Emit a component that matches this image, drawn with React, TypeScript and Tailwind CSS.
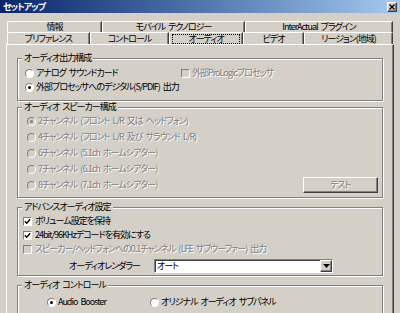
import React from 'react'

const dis = 'text-[#808080] [text-shadow:1px_1px_0_#fff]'
const etched = 'border border-[#808080] shadow-[1px_1px_0_#fff,inset_1px_1px_0_#fff]'
const raised = 'border border-white border-r-[#404040] border-b-[#404040] shadow-[inset_-1px_-1px_0_#808080]'
const sunken = 'border border-[#808080] border-r-white border-b-white shadow-[inset_1px_1px_0_#404040]'

function Radio({ on = false, off = false }: { on?: boolean; off?: boolean }) {
  return (
    <span
      className={`flex h-[9px] w-[9px] shrink-0 items-center justify-center rounded-full border border-[#808080] border-r-white border-b-white ${
        off ? 'bg-[#d4d0c8]' : 'bg-white'
      }`}
    >
      {on && <span className={`h-[3px] w-[3px] rounded-full ${off ? 'bg-[#808080]' : 'bg-black'}`} />}
    </span>
  )
}

function Check({ on = false, off = false }: { on?: boolean; off?: boolean }) {
  return (
    <span
      className={`flex h-[9px] w-[9px] shrink-0 items-center justify-center border border-[#808080] border-r-white border-b-white ${
        off ? 'bg-[#d4d0c8]' : 'bg-white'
      }`}
    >
      {on && (
        <svg width="7" height="7" viewBox="0 0 7 7">
          <path d="M0.8 3.2 L2.7 5.2 L6.2 1.3" fill="none" stroke="#000" strokeWidth="1.4" />
        </svg>
      )}
    </span>
  )
}

function Tab({ label, w, active = false }: { label: string; w: string; active?: boolean }) {
  return (
    <div
      className={`${w} flex shrink-0 items-center justify-center rounded-tl-[2px] border-l border-t border-white border-r border-r-[#404040] shadow-[inset_-1px_0_0_#808080] px-[2px]`}
    >
      {active ? (
        <span className="flex h-[10px] w-full items-center justify-center border border-dotted border-black">{label}</span>
      ) : (
        <span className="whitespace-nowrap">{label}</span>
      )}
    </div>
  )
}

function Group({ title, className, children }: { title: string; className: string; children: React.ReactNode }) {
  return (
    <fieldset className={`${etched} ${className}`}>
      <legend className="ml-[4px] bg-[#d4d0c8] px-[2px] leading-[10px]">{title}</legend>
      {children}
    </fieldset>
  )
}

export default function App() {
  return (
    <div className="h-[313px] w-[400px] overflow-hidden bg-[#d4d0c8] font-['Noto_Sans_CJK_JP',sans-serif] text-[9px] leading-[10px] tracking-[-1px] text-black [font-feature-settings:'palt'] [word-spacing:2px]">
      {/* title bar */}
      <div className="flex h-[13px] items-center justify-between bg-linear-to-r from-[#0a246a] to-[#a6caf0] pl-[3px] pr-[3px]">
        <span className="font-bold text-white">セットアップ</span>
        <span className={`flex h-[10px] w-[10px] items-center justify-center bg-[#d4d0c8] ${raised}`}>
          <svg width="6" height="6" viewBox="0 0 6 6">
            <path d="M0.5 0.5 L5.5 5.5 M5.5 0.5 L0.5 5.5" stroke="#000" strokeWidth="1.3" />
          </svg>
        </span>
      </div>

      <div className="px-[6px]">
        {/* tabs */}
        <div className="ml-[1px] mt-[8px] flex h-[11px]">
          <Tab w="w-[95px]" label="情報" />
          <Tab w="w-[143px]" label="モバイル テクノロジー" />
          <Tab w="w-[148px]" label="InterActual プラグイン" />
        </div>
        <div className="ml-[1px] flex h-[12px]">
          <Tab w="w-[83px]" label="プリファレンス" />
          <Tab w="w-[79px]" label="コントロール" />
          <Tab w="w-[74px]" label="オーディオ" active />
          <Tab w="w-[61px]" label="ビデオ" />
          <Tab w="w-[89px]" label="リージョン(地域)" />
        </div>

        {/* panel */}
        <div className="h-[300px] border-l border-t border-white border-r border-r-[#404040] shadow-[inset_-1px_0_0_#808080] pl-[10px] pr-[10px] pt-[8px]">
          <Group title="オーディオ出力構成" className="pb-[6px] pt-[3px]">
            <div className="flex h-[14px] items-center pl-[7px]">
              <div className="flex w-[156px] items-center gap-[2px]">
                <Radio />
                <span>アナログ サウンドカード</span>
              </div>
              <div className="flex items-center gap-[2px]">
                <Check off />
                <span className={dis}>外部ProLogicプロセッサ</span>
              </div>
            </div>
            <div className="flex h-[14px] items-center gap-[2px] pl-[7px]">
              <Radio on />
              <span>外部プロセッサへのデジタル(S/PDIF) 出力</span>
            </div>
          </Group>

          <Group title="オーディオ スピーカー構成" className="mt-[1px] pb-[4px] pt-[1px]">
            {[
              '2チャンネル (フロント L/R 又は ヘッドフォン)',
              '4チャンネル (フロント L/R 及び サラウンド L/R)',
              '6チャンネル (5.1ch ホームシアター)',
              '7チャンネル (6.1ch ホームシアター)',
            ].map((t, i) => (
              <div key={t} className="flex h-[16px] items-center gap-[2px] pl-[9px]">
                <Radio off on={i === 0} />
                <span className={dis}>{t}</span>
              </div>
            ))}
            <div className="flex h-[16px] items-center justify-between pl-[9px] pr-[4px]">
              <div className="flex items-center gap-[2px]">
                <Radio off />
                <span className={dis}>8チャンネル (7.1ch ホームシアター)</span>
              </div>
              <span className={`flex h-[16px] w-[75px] items-center justify-center ${raised}`}>
                <span className={dis}>テスト</span>
              </span>
            </div>
          </Group>

          <Group title="アドバンスオーディオ設定" className="mt-[4px] pb-[1px] pt-[2px]">
            <div className="flex h-[14px] items-center gap-[3px] pl-[5px]">
              <Check on />
              <span>ボリューム設定を保持</span>
            </div>
            <div className="flex h-[14px] items-center gap-[3px] pl-[5px]">
              <Check on />
              <span>24bit/96KHzデコードを有効にする</span>
            </div>
            <div className="flex h-[14px] items-center gap-[3px] pl-[5px]">
              <Check off />
              <span className={dis}>スピーカー/ヘッドフォンへの0.1チャンネル (LFE サブウーファー) 出力</span>
            </div>
            <div className="mt-[2px] flex h-[16px] items-center">
              <span className="w-[122px] text-right">オーディオレンダラー</span>
              <div className={`ml-[14px] flex h-[14px] w-[179px] items-center justify-between bg-white pl-[2px] ${sunken}`}>
                <span>オート</span>
                <span className={`flex h-[12px] w-[12px] items-center justify-center bg-[#d4d0c8] ${raised}`}>
                  <svg width="7" height="4" viewBox="0 0 7 4">
                    <path d="M0 0 H7 L3.5 4 Z" fill="#000" />
                  </svg>
                </span>
              </div>
            </div>
          </Group>

          <Group title="オーディオ コントロール" className="mt-[4px] pb-[6px] pt-[5px]">
            <div className="flex h-[14px] items-center pl-[29px]">
              <div className="flex w-[103px] items-center gap-[2px]">
                <Radio on />
                <span>Audio Booster</span>
              </div>
              <div className="flex items-center gap-[2px]">
                <Radio />
                <span>オリジナル オーディオ サブパネル</span>
              </div>
            </div>
          </Group>
        </div>
      </div>
    </div>
  )
}
